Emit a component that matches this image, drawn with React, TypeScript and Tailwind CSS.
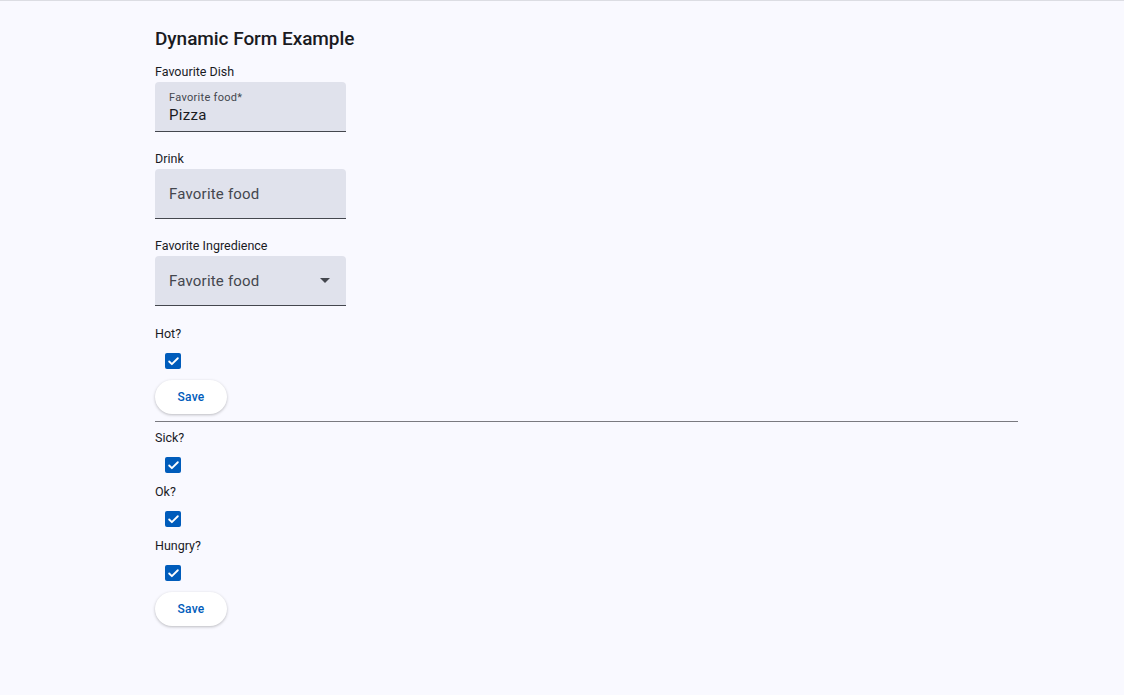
import { Check } from "lucide-react";

const font = { fontFamily: "Roboto, 'Liberation Sans', sans-serif" };

function Label({ children }: { children: React.ReactNode }) {
  return <div className="h-4 text-[12.5px] leading-4 text-[#1a1b1f]">{children}</div>;
}

function TextField({ label, value, select }: { label: string; value?: string; select?: boolean }) {
  return (
    <div className="mt-[2px] flex h-[50px] w-[191px] items-center justify-between rounded-t-[4px] border-b border-[#44474e] bg-[#e0e2ec] px-[14px]">
      {value ? (
        <div className="flex flex-col pt-[2px]">
          <span className="text-[11px] leading-[14px] tracking-[0.3px] text-[#44474e]">{label}*</span>
          <span className="text-[15px] leading-5 tracking-[0.3px] text-[#1a1b1f]">{value}</span>
        </div>
      ) : (
        <span className="text-[15px] leading-5 tracking-[0.2px] text-[#44474e]">{label}</span>
      )}
      {select && (
        <svg width="10" height="5" viewBox="0 0 10 5" className="mr-[2px]">
          <path d="M0 0 L10 0 L5 5 Z" fill="#44474e" />
        </svg>
      )}
    </div>
  );
}

function CheckRow({ label }: { label: string }) {
  return (
    <div>
      <Label>{label}</Label>
      <div className="flex h-[38px] items-center pl-[10px]">
        <div className="flex h-4 w-4 items-center justify-center rounded-[2px] bg-[#005cbb]">
          <Check size={13} strokeWidth={3.4} color="#ffffff" />
        </div>
      </div>
    </div>
  );
}

function SaveButton() {
  return (
    <button className="flex h-[34px] w-[72px] items-center justify-center rounded-full bg-white text-[12px] font-medium tracking-[0.2px] text-[#005cbb] shadow-[0_1px_3px_rgba(0,0,0,0.25)]">
      Save
    </button>
  );
}

export default function App() {
  return (
    <div className="min-h-[695px] border-t border-[#dcdde3] bg-[#f9f9ff]" style={font}>
      <div className="ml-[155px] w-[863px] pt-[26px]">
        <h1 className="text-[19px] font-medium leading-6 tracking-[-0.05px] text-[#1a1b1f]">Dynamic Form Example</h1>

        <div className="mt-[13px]">
          <Label>Favourite Dish</Label>
          <TextField label="Favorite food" value="Pizza" />
        </div>
        <div className="mt-[19px]">
          <Label>Drink</Label>
          <TextField label="Favorite food" />
        </div>
        <div className="mt-[19px]">
          <Label>Favorite Ingredience</Label>
          <TextField label="Favorite food" select />
        </div>

        <div className="mt-[20px]">
          <CheckRow label="Hot?" />
          <SaveButton />
        </div>

        <div className="mt-[7px] h-px w-full bg-[#7a7a80]" />

        <div className="mt-[8px]">
          <CheckRow label="Sick?" />
          <CheckRow label="Ok?" />
          <CheckRow label="Hungry?" />
          <SaveButton />
        </div>
      </div>
    </div>
  );
}
